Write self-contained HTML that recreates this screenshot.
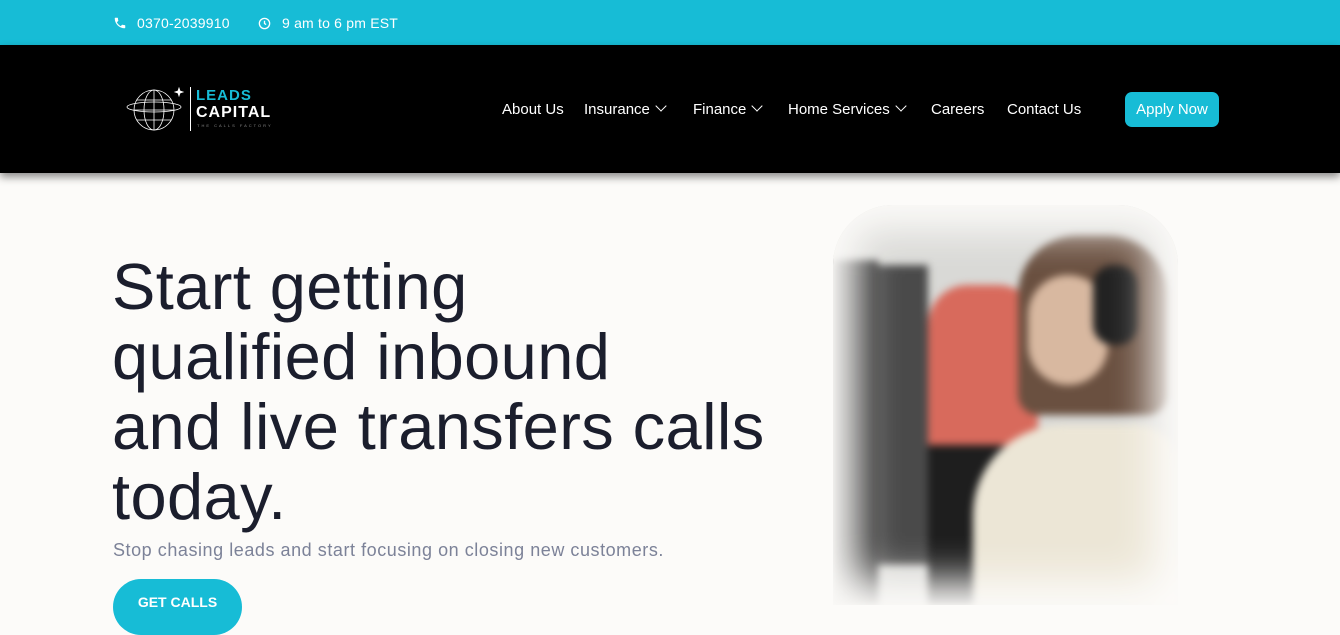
<!DOCTYPE html>
<html><head><style>
*{margin:0;padding:0;box-sizing:border-box}
body{width:1340px;height:605px;overflow:hidden;background:#fcfbf9;font-family:"Liberation Sans",sans-serif;position:relative}
.top{position:absolute;left:0;top:0;width:1340px;height:45px;background:#17bcd6;color:#fff;font-size:14px;letter-spacing:0.2px}
.top span{position:absolute;top:15px}
.nav{position:absolute;left:0;top:45px;width:1340px;height:128px;background:#000;box-shadow:0 4px 8px rgba(0,0,0,.45)}
.nav a{position:absolute;top:56px;color:#fff;font-size:15px;text-decoration:none}
.chev{display:inline-block;width:8px;height:8px;border-right:1.3px solid #fff;border-bottom:1.3px solid #fff;transform:rotate(45deg);margin-left:7px;position:relative;top:-4px}
.btn{position:absolute;left:1125px;top:47px;width:94px;height:35px;background:#17bcd6;border-radius:7px;color:#fff;font-size:15px;text-align:center;line-height:35px}
h1{position:absolute;left:112px;top:252px;font-size:65px;font-weight:500;line-height:70px;color:#1b1e2d;letter-spacing:0.4px}
.sub{position:absolute;left:113px;top:540px;font-size:18px;color:#7c8298;letter-spacing:0.55px}
.cta{position:absolute;left:113px;top:579px;width:129px;height:56px;background:#17bcd6;border-radius:28px;color:#fff;font-weight:bold;font-size:14px;text-align:center;padding-top:15px}
.photo{position:absolute;left:833px;top:205px;width:345px;height:400px;border-radius:60px 60px 0 0;overflow:hidden;background:#d9d9d6}
.in{position:absolute;inset:0;filter:blur(4px)}
</style></head><body>
<div class="top">
<svg style="position:absolute;left:113px;top:16px" width="14" height="14" viewBox="0 0 24 24"><path fill="#fff" d="M6.6 10.8a15 15 0 006.6 6.6l2.2-2.2c.3-.3.7-.4 1-.2 1.1.4 2.3.6 3.6.6.6 0 1 .4 1 1V20c0 .6-.4 1-1 1A17 17 0 013 4c0-.6.4-1 1-1h3.5c.6 0 1 .4 1 1 0 1.3.2 2.5.6 3.6.1.3 0 .7-.2 1z"/></svg>
<span style="left:137px">0370-2039910</span>
<svg style="position:absolute;left:258px;top:17px" width="13" height="13" viewBox="0 0 24 24" fill="none" stroke="#fff" stroke-width="2.4"><circle cx="12" cy="12" r="9.5"/><path d="M12 7v5l3 2"/></svg>
<span style="left:282px">9 am to 6 pm EST</span>
</div>
<div class="nav">
<svg style="position:absolute;left:126px;top:40px" width="70" height="50" viewBox="0 0 70 50" fill="none" stroke="#fff" stroke-width="0.8"><circle cx="28" cy="25" r="20"/><ellipse cx="28" cy="25" rx="10" ry="20"/><path d="M8 25h40M11 15h34M11 35h34M28 5v40"/><ellipse cx="28" cy="22" rx="27" ry="5"/><path d="M53 3l1 3 3 1-3 1-1 3-1-3-3-1 3-1z" fill="#fff"/></svg>
<div style="position:absolute;left:190px;top:42px;width:1px;height:44px;background:#fff"></div>
<div style="position:absolute;left:196px;top:42px;color:#17bcd6;font-weight:bold;font-size:15px;letter-spacing:1px">LEADS</div>
<div style="position:absolute;left:196px;top:59px;color:#fff;font-weight:bold;font-size:16px;letter-spacing:1px">CAPITAL</div>
<div style="position:absolute;left:197px;top:78px;color:#888;font-size:4px;letter-spacing:2px">THE CALLS FACTORY</div>
<a style="left:502px">About Us</a>
<a style="left:584px">Insurance<span class="chev"></span></a>
<a style="left:693px">Finance<span class="chev"></span></a>
<a style="left:788px">Home Services<span class="chev"></span></a>
<a style="left:931px">Careers</a>
<a style="left:1007px">Contact Us</a>
<div class="btn">Apply Now</div>
</div>
<h1>Start getting<br>qualified inbound<br>and live transfers calls<br>today.</h1>
<div class="sub">Stop chasing leads and start focusing on closing new customers.</div>
<div class="cta">GET CALLS</div>
<div class="photo"><div class="in">
<div style="position:absolute;left:0;top:55px;width:45px;height:345px;background:#333"></div>
<div style="position:absolute;left:45px;top:60px;width:50px;height:300px;background:#4a4a4a"></div>
<div style="position:absolute;left:95px;top:80px;width:110px;height:190px;background:#d86a5c;border-radius:40px 40px 10px 10px"></div>
<div style="position:absolute;left:95px;top:240px;width:130px;height:160px;background:#1e1e1e"></div>
<div style="position:absolute;left:185px;top:30px;width:150px;height:180px;background:#6a5040;border-radius:60px 60px 20px 20px"></div>
<div style="position:absolute;left:195px;top:70px;width:80px;height:110px;background:#d8b8a0;border-radius:40px"></div>
<div style="position:absolute;left:260px;top:60px;width:45px;height:80px;background:#222;border-radius:20px"></div>
<div style="position:absolute;left:140px;top:220px;width:205px;height:180px;background:#ece6d6;border-radius:90px 40px 0 0"></div>
</div>
<div style="position:absolute;inset:0;box-shadow:inset 0 0 40px 25px #fcfbf9"></div>
</div>
</body></html>
